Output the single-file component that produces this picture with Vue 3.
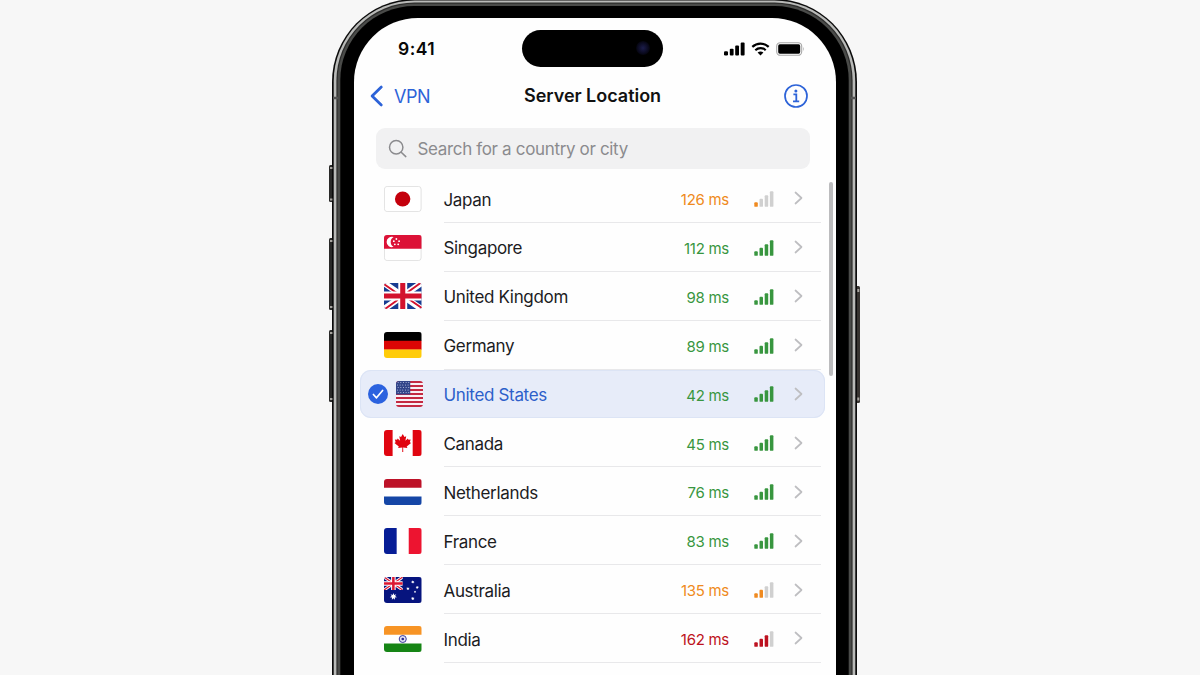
<script setup>
const servers = [
  { code: 'jp', name: 'Japan', ping: 126, tone: 'orange', bars: 1 },
  { code: 'sg', name: 'Singapore', ping: 112, tone: 'green', bars: 4 },
  { code: 'gb', name: 'United Kingdom', ping: 98, tone: 'green', bars: 4 },
  { code: 'de', name: 'Germany', ping: 89, tone: 'green', bars: 4 },
  { code: 'us', name: 'United States', ping: 42, tone: 'green', bars: 4, selected: true },
  { code: 'ca', name: 'Canada', ping: 45, tone: 'green', bars: 4 },
  { code: 'nl', name: 'Netherlands', ping: 76, tone: 'green', bars: 4 },
  { code: 'fr', name: 'France', ping: 83, tone: 'green', bars: 4 },
  { code: 'au', name: 'Australia', ping: 135, tone: 'orange', bars: 2 },
  { code: 'in', name: 'India', ping: 162, tone: 'red', bars: 3 },
]
const barHeights = [4.5, 8, 11.5, 15.5]
const frame = [
  { x: 0, y: -1, r: 83, fill: '#0b0b0b' },
  { x: 1.7, y: 0.4, r: 81, fill: '#b9bab8' },
  { x: 4.4, y: 2.6, r: 78, fill: '#2c2c2b' },
  { x: 5.6, y: 3.8, r: 77, fill: '#4a4b49' },
  { x: 8.3, y: 6, r: 74, fill: '#000' },
]
const whiteStars = [
  [28.4, 5, 1.3], [23.6, 11.7, 1.3], [32.8, 10.4, 1.2], [28.4, 21.6, 1.4], [30.6, 14.8, 0.7],
]
function star(cx, cy, r, n = 7) {
  const pts = []
  for (let i = 0; i < n * 2; i++) {
    const a = (Math.PI * i) / n - Math.PI / 2
    const k = i % 2 ? r * 0.48 : r
    pts.push(`${(cx + k * Math.cos(a)).toFixed(2)},${(cy + k * Math.sin(a)).toFixed(2)}`)
  }
  return pts.join(' ')
}
</script>

<template>
  <main class="stage">
    <div class="phone">
      <svg class="bezel" width="533" height="720" viewBox="-4 -2 533 720">
        <g>
          <rect x="-3" y="165" width="6" height="37" rx="1.5" fill="#292928" />
          <rect x="-3" y="238" width="6" height="72" rx="1.5" fill="#292928" />
          <rect x="-3" y="330" width="6" height="72" rx="1.5" fill="#292928" />
          <rect x="522" y="286" width="6" height="117" rx="1.5" fill="#383431" />
        </g>
        <rect v-for="f in frame" :key="f.x" :x="f.x" :y="f.y" :width="525 - f.x * 2" height="900" :rx="f.r" :fill="f.fill" />
        <path d="M1 98h5M519 98h5" stroke="#555" stroke-width="2.5" />
        <g fill="#a9a6a1">
          <rect x="-2" y="167" width="2.4" height="2" /><rect x="-2" y="198.500" width="2.400" height="2" />
          <rect x="-2" y="240" width="2.4" height="2" /><rect x="-2" y="306" width="2.4" height="2" />
          <rect x="-2" y="332" width="2.4" height="2" /><rect x="-2" y="398" width="2.4" height="2" />
          <rect x="525.300" y="289" width="2" height="3" /><rect x="525.300" y="397.500" width="2" height="3" />
        </g>
      </svg>

      <section class="screen">
        <header class="status">
          <span class="time">9:41</span>
          <div class="island"><i class="camera"></i></div>
          <div class="system">
            <svg width="21" height="14" viewBox="0 0 21 14">
              <rect x="0" y="9.300" width="4" height="4.200" rx="1.200" /><rect x="5.800" y="6.800" width="3.800" height="6.700" rx="1" />
              <rect x="11.200" y="3.600" width="3.800" height="9.900" rx="1" /><rect x="16.700" y="0.500" width="3.900" height="13" rx="1" />
            </svg>
            <svg class="wifi" width="19" height="14" viewBox="0 0 19 14">
              <path d="M1.300 4.900C6 .4 13 .4 17.700 4.900M4.300 8.200c3-2.800 7.400-2.800 10.400 0" fill="none" stroke="#000" stroke-width="2.200" />
              <path d="M6.600 10.600c1.700-1.500 4.100-1.500 5.800 0L9.500 13.500z" />
            </svg>
            <svg class="battery" width="29" height="14" viewBox="0 0 29 14">
              <rect x="0.700" y="0.700" width="25" height="12.600" rx="3.600" fill="none" stroke="#a8a8a8" stroke-width="1.100" />
              <rect x="2.200" y="2.300" width="22" height="9.400" rx="1.600" />
              <path d="M27.200 4.800q1.500 2.200 0 4.400z" fill="#aaa" />
            </svg>
          </div>
        </header>

        <nav class="nav">
          <a class="back">
            <svg width="14" height="22" viewBox="0 0 14 22"><path d="M11.300 2.100 2.100 11l9.200 8.900" fill="none" stroke="#2d63d8" stroke-width="2.800" stroke-linecap="round" stroke-linejoin="round" /></svg>
            <span>VPN</span>
          </a>
          <h1>Server Location</h1>
          <svg class="info" width="24" height="24" viewBox="0 0 24 24" fill="none" stroke="#2d63d8">
            <circle cx="12" cy="12" r="11" stroke-width="1.700" />
            <circle cx="11.900" cy="6.900" r="1.500" fill="#2d63d8" stroke="none" />
            <path d="M9.400 10.400h2.900v6.800M9 17.400h6.200" stroke-width="1.800" />
          </svg>
        </nav>

        <div class="search">
          <svg width="20" height="20" viewBox="0 0 20 20" fill="none" stroke="#8b8b8e" stroke-width="1.500" stroke-linecap="round">
            <circle cx="8.200" cy="8.200" r="6.700" /><path d="m13.200 13.200 4.600 4.400" />
          </svg>
          <span>Search for a country or city</span>
        </div>

        <div class="list">
          <div v-for="s in servers" :key="s.code" class="row" :class="{ selected: s.selected }">
            <div class="lead">
              <svg v-if="s.selected" class="check" width="20" height="20" viewBox="0 0 20 20">
                <circle cx="10" cy="10" r="10" fill="#2b62df" />
                <path d="m5.400 10.500 3.100 3.300 6.100-7.300" fill="none" stroke="#fff" stroke-width="1.700" stroke-linecap="round" stroke-linejoin="round" />
              </svg>
              <svg class="flag" :width="s.selected ? 27.500 : 37.500" height="26" :viewBox="s.selected ? '0 0 28 26' : '0 0 37 26'" preserveAspectRatio="none">
                <g v-if="s.code === 'jp'"><rect x=".4" y=".4" width="36.200" height="25.200" rx="2.700" fill="#fff" stroke="#dedede" stroke-width=".9" /><circle cx="18.400" cy="13" r="7.600" fill="#c4000c" /></g>
                <g v-else-if="s.code === 'sg'">
                  <rect x=".4" y=".4" width="36.200" height="25.200" rx="2.700" fill="#fff" stroke="#dedede" stroke-width=".9" /><path fill="#dc1237" d="M0 0h37v13.700H0z" />
                  <path fill="#fff" d="M9.500 2a5.200 5.200 0 1 0 0 9.800A5.600 5.600 0 0 1 9.500 2z" />
                  <g fill="#fff"><circle cx="12.200" cy="4" r=".9" /><circle cx="9.700" cy="6.200" r=".9" /><circle cx="14.900" cy="6.200" r=".9" /><circle cx="10.700" cy="9.300" r=".9" /><circle cx="14" cy="9.300" r=".9" /></g>
                </g>
                <g v-else-if="s.code === 'gb'">
                  <path fill="#173c91" d="M0 0h37v26H0z" />
                  <path d="m0 0 37 26M37 0 0 26" stroke="#fff" stroke-width="6" />
                  <path d="m-1 .5 14 9.800M38 25.500l-14-9.800M36 0 23 9.500M1 26l13-9.500" stroke="#d3122d" stroke-width="1.900" />
                  <path d="M18.500 0v26M0 13h37" stroke="#fff" stroke-width="8.800" />
                  <path d="M18.500 0v26M0 13h37" stroke="#d3122d" stroke-width="5" />
                </g>
                <g v-else-if="s.code === 'de'"><path d="M0 0h37v9H0z" /><path fill="#dc0505" d="M0 8.800h37v9H0z" /><path fill="#ffcc0a" d="M0 17.500h37V26H0z" /></g>
                <g v-else-if="s.code === 'us'">
                  <path fill="#f8eff4" d="M0 0h28v26H0z" />
                  <rect v-for="i in 7" :key="i" x="0" :y="(i - 1) * 4" width="28" height="2" fill="#c32942" />
                  <path fill="#32458a" d="M0 0h14.500v13.500H0z" />
                  <template v-for="r in 5" :key="r"><circle v-for="c in 5" :key="c" :cx="c * 2.700 - 1.200 + (r % 2) * 0.700" :cy="r * 2.500 - 0.900" r=".5" fill="#cdd4ee" /></template>
                </g>
                <g v-else-if="s.code === 'ca'">
                  <path fill="#fff" d="M0 0h37v26H0z" /><path fill="#e00510" d="M0 0h8.500v26H0zM28.300 0H37v26h-8.700z" />
                  <path fill="#e00510" d="m18.500 4-1.700 3-1.700-.8.800 4.500-2.500-2.100-.5 1.200-2.200-.4.800 2.900-1.200.7 4.300 3.400-.7 1.600 4.200-.6-.1 4.600h1l-.1-4.600 4.200.6-.7-1.600 4.300-3.400-1.200-.7.800-2.900-2.200.4-.5-1.200-2.500 2.100.8-4.500-1.700.8z" />
                </g>
                <g v-else-if="s.code === 'nl'"><path fill="#fff" d="M0 0h37v26H0z" /><path fill="#bd1228" d="M0 0h37v8.800H0z" /><path fill="#1546a6" d="M0 17.400h37V26H0z" /></g>
                <g v-else-if="s.code === 'fr'"><path fill="#fff" d="M0 0h37v26H0z" /><path fill="#061d96" d="M0 0h12.500v26H0z" /><path fill="#ed1430" d="M24.400 0H37v26H24.400z" /></g>
                <g v-else-if="s.code === 'au'">
                  <path fill="#06147e" d="M0 0h37v26H0z" />
                  <svg width="18.500" height="13" viewBox="0 0 37 26">
                    <path d="m0 0 37 26M37 0 0 26" stroke="#fff" stroke-width="6" /><path d="m0 0 37 26M37 0 0 26" stroke="#dc1731" stroke-width="2.500" />
                    <path d="M18.500 0v26M0 13h37" stroke="#fff" stroke-width="9" /><path d="M18.500 0v26M0 13h37" stroke="#dc1731" stroke-width="5" />
                  </svg>
                  <polygon :points="star(9.300, 19.500, 3.600)" fill="#fff" />
                  <polygon v-for="(p, i) in whiteStars" :key="i" :points="star(p[0], p[1], p[2] + 0.500)" fill="#fff" />
                </g>
                <g v-else>
                  <path fill="#fff" d="M0 0h37v26H0z" /><path fill="#f79425" d="M0 0h37v8.700H0z" /><path fill="#168515" d="M0 17.400h37V26H0z" />
                  <circle cx="18.500" cy="13" r="3.500" fill="#dfdff4" stroke="#2a2a92" stroke-width=".9" /><circle cx="18.500" cy="13" r="1.300" fill="#2a2a92" />
                </g>
              </svg>
            </div>
            <div class="body">
              <span class="name">{{ s.name }}</span>
              <span class="ping" :class="s.tone">{{ s.ping }} ms</span>
              <svg class="signal" :class="s.tone" width="20" height="16" viewBox="0 0 20 16">
                <rect v-for="(h, i) in barHeights" :key="i" :x="i * 5.200 + 0.300" :y="15.800 - h" width="3.500" :height="h" rx=".9" :fill="i < s.bars ? 'currentColor' : '#d0d0d0'" />
              </svg>
              <svg class="chevron" width="10" height="14" viewBox="0 0 10 14"><path d="m1.500 1.500 6 5.500-6 5.500" fill="none" stroke="#bebec1" stroke-width="1.700" stroke-linecap="round" stroke-linejoin="round" /></svg>
            </div>
          </div>
        </div>
        <i class="scrollbar"></i>
      </section>
    </div>
  </main>
</template>

<style>
html, body { margin: 0; overflow: hidden; }
</style>

<style scoped>
.stage {
  width: 1200px; height: 675px; overflow: hidden; background: #f7f7f7;
  font-family: Inter, "Liberation Sans", sans-serif; color: #1c1c1e;
  box-sizing: border-box; padding-left: 332px;
}
svg { display: block; flex: none; }
.phone { position: relative; box-sizing: border-box; width: 525px; height: 720px; padding: 18px 21px 0 22px; }
.bezel { position: absolute; left: -4px; top: -2px; }
.screen { position: relative; box-sizing: border-box; height: 702px; background: #fefefe; border-radius: 64px 64px 0 0; overflow: hidden; }
.status { display: flex; height: 61px; box-sizing: border-box; padding: 12px 31px 0 44px; }
.time { flex: none; width: 124px; padding-top: 7px; font-size: 17.500px; font-weight: 600; line-height: 24px; color: #080808; letter-spacing: 0.500px; }
.island { flex: none; box-sizing: border-box; width: 141px; height: 37px; border-radius: 19px; background: #000; padding: 11px 0 0 114px; }
.camera { display: block; width: 14px; height: 14px; border-radius: 50%; background: radial-gradient(circle, #1c1d4b 0, #0d0d26 45%, #03030a 75%); }
.system { display: flex; margin-left: 60.500px; padding-top: 12px; }
.wifi { margin-left: 6px; }
.battery { margin-left: 6px; }
.nav { display: flex; align-items: center; height: 34px; padding: 0 28.500px 0 16px; color: #2d63d8; }
.back { display: flex; align-items: center; width: 154px; font-size: 18px; }
.back span { margin-left: 10px; letter-spacing: -0.500px; }
h1 { margin: 0; flex: 1; font-size: 18px; line-height: 24px; font-weight: 600; color: #111; letter-spacing: -0.030px; white-space: nowrap; }
.search { display: flex; align-items: center; height: 41px; width: 434px; box-sizing: border-box; margin: 15px 0 0 21.500px; padding-left: 12.500px; border-radius: 9px; background: #f1f1f2; color: #8b8b8e; font-size: 17px; }
.search span { margin-left: 9.500px; letter-spacing: -0.340px; white-space: nowrap; }
.list { margin: 5px 0 0 6px; width: 465px; }
.row { display: flex; height: 48.900px; box-sizing: border-box; padding-right: 4px; }
.lead { width: 83.500px; display: flex; align-items: center; box-sizing: border-box; padding-left: 24px; padding-top: 0.400px; flex: none; }
.flag { border-radius: 3px; overflow: hidden; }
.body { flex: 1; display: flex; align-items: center; border-bottom: 1px solid #e8e8ea; padding-top: 3.300px; box-sizing: border-box; }
.name { flex: 1; font-size: 17px; letter-spacing: -0.330px; white-space: nowrap; }
.ping { width: 80px; text-align: right; font-size: 15px; letter-spacing: -0.280px; white-space: nowrap; }
.signal { margin: 0 0 1.500px 24.500px; }
.chevron { margin: 0 17px 2.300px 20.500px; }
.green { color: #38963f; }
.orange { color: #ef8a20; }
.red { color: #bd1220; }
.selected { border-radius: 11px; background: #e7ecf9; box-shadow: inset 0 0 0 1px #dce4f5; }
.selected .lead { padding-left: 8px; }
.selected .flag { margin-left: 7.500px; }
.selected .body { border-color: transparent; }
.selected .name { color: #2d5fca; }
.scrollbar { position: absolute; left: 475px; top: 164px; width: 4px; height: 194px; border-radius: 2px; background: #bcbcbe; }
</style>
